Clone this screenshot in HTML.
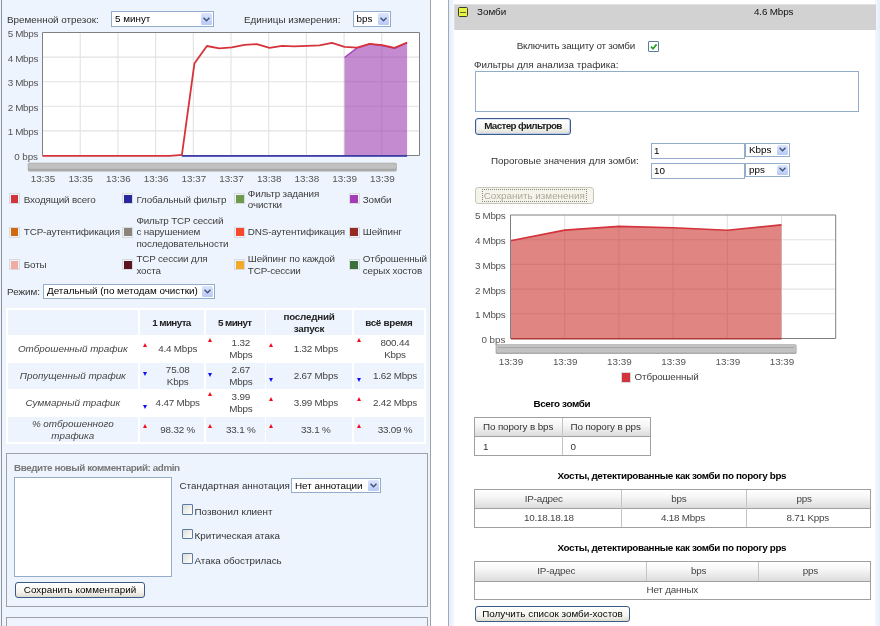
<!DOCTYPE html>
<html lang="ru">
<head>
<meta charset="utf-8">
<title>Зомби</title>
<style>
html,body{margin:0;padding:0;}
body{width:880px;height:626px;overflow:hidden;background:#fff;position:relative;
 font-family:"Liberation Sans",sans-serif;font-size:9.85px;color:#222;line-height:11px;}
#wrap{position:absolute;left:0;top:0;width:880px;height:626px;overflow:hidden;will-change:transform;}
.abs{position:absolute;}
.t{position:absolute;white-space:nowrap;color:#333;}
.b{font-weight:bold;letter-spacing:-0.36px;}
#left{position:absolute;left:0;top:0;width:430px;height:626px;background:#edf4fd;}
#lb1{position:absolute;left:1px;top:0;width:1px;height:626px;background:#8e9299;}
#lb2{position:absolute;left:430px;top:0;width:1px;height:626px;background:#9fa2a8;}
#rb1{position:absolute;left:448px;top:0;width:1px;height:626px;background:#a4a9b3;}
#rstrip{position:absolute;left:449px;top:0;width:5px;height:626px;background:linear-gradient(90deg,#e4eefb,#f4f8fd);}
#rstrip2{position:absolute;left:875px;top:0;width:5px;height:626px;background:linear-gradient(90deg,#f4f8fd,#e4eefb);}
.sel{position:absolute;background:#fff;border:1px solid #93acc9;box-sizing:border-box;}
.sel .tx{position:absolute;left:3px;top:0.7px;color:#000;white-space:nowrap;}
.sel .ar{position:absolute;right:1px;top:1px;bottom:1px;width:11px;background:linear-gradient(#dbe5fc,#b7c9f5);border-radius:1.5px;}
.sel .ar svg{position:absolute;left:2px;top:50%;margin-top:-2.5px;}
.inp{position:absolute;background:#fff;border:1px solid #93acc9;box-sizing:border-box;}
.inp span{position:absolute;left:2px;top:1.2px;color:#000;}
.sw{position:absolute;width:7.6px;height:8px;border:1px solid #d8dadd;padding:0.6px;background-clip:content-box;}
.lg{position:absolute;white-space:nowrap;color:#3c3c3c;line-height:11.6px;letter-spacing:-0.14px;}
.btn{position:absolute;box-sizing:border-box;border:1px solid #3c5a86;border-radius:3px;background:linear-gradient(#ffffff,#f6f5f0 60%,#dedbd0);color:#000;text-align:center;white-space:nowrap;}
.cb{position:absolute;box-sizing:border-box;width:10px;height:10px;border:1px solid #5a7ba6;border-radius:1px;background:linear-gradient(135deg,#deded6,#fff);}
.cell{position:absolute;background:#edf4fd;}
.c{position:absolute;text-align:center;white-space:nowrap;color:#444;transform:translateX(-50%);line-height:12px;letter-spacing:-0.2px;}
.gt{position:absolute;box-sizing:border-box;border:1px solid #a0a0a0;background:#fff;}
.gh{position:absolute;left:0;top:0;right:0;background:linear-gradient(#ffffff,#f6f6f6 40%,#dcdcdc);border-bottom:1px solid #a0a0a0;}
.vd{position:absolute;top:0;bottom:0;width:1px;background:#c4c4c4;}
.up{position:absolute;width:0;height:0;border-left:2.9px solid transparent;border-right:2.9px solid transparent;border-bottom:4px solid #f40a1a;margin:-0.2px 0 0 -0.3px;}
.dn{position:absolute;width:0;height:0;border-left:2.9px solid transparent;border-right:2.9px solid transparent;border-top:4px solid #1010f4;margin:-0.2px 0 0 -0.3px;}
</style>
</head>
<body>
<div id="wrap">
<div id="left"></div><div id="lb1"></div><div id="lb2"></div><div id="rb1"></div><div id="rstrip"></div><div id="rstrip2"></div>
<div class="t" style="left:7px;top:13.7px;">Временной отрезок:</div>
<div class="sel" style="left:111px;top:11.4px;width:102.5px;height:15.5px;"><span class="tx" style="left:3px">5 минут</span><span class="ar"><svg width="7" height="5" viewBox="0 0 7 5"><path d="M0.5 0.7 L3.5 3.7 L6.5 0.7" fill="none" stroke="#42557f" stroke-width="1.45"/></svg></span></div>
<div class="t" style="left:244px;top:13.7px;">Единицы измерения:</div>
<div class="sel" style="left:352.5px;top:11.4px;width:38px;height:15.5px;"><span class="tx" style="left:3px">bps</span><span class="ar"><svg width="7" height="5" viewBox="0 0 7 5"><path d="M0.5 0.7 L3.5 3.7 L6.5 0.7" fill="none" stroke="#42557f" stroke-width="1.45"/></svg></span></div>
<svg class="abs" style="left:0;top:26px;" width="430" height="165" viewBox="0 26 430 165" font-family="Liberation Sans, sans-serif" font-size="9.85">
<rect x="42.5" y="32.5" width="377.0" height="123.0" fill="#fff"/>
<path d="M80.2 32.5V155.5M117.9 32.5V155.5M155.6 32.5V155.5M193.3 32.5V155.5M231.0 32.5V155.5M268.7 32.5V155.5M306.4 32.5V155.5M344.1 32.5V155.5M381.8 32.5V155.5M42.5 57.1H419.5M42.5 81.7H419.5M42.5 106.3H419.5M42.5 130.9H419.5" stroke="#e2e2e2" stroke-width="1.1" fill="none"/>
<path d="M344.5 57.6 L357.1 47.9 L369.6 44.2 L382.1 45.5 L394.6 48.2 L407.1 42.8 L407.1 155.5 L344.5 155.5Z" fill="rgba(158,62,178,0.6)"/>
<path d="M344.5 57.6 L357.1 47.9 L369.6 44.2 L382.1 45.5 L394.6 48.2 L407.1 42.8" fill="none" stroke="#a43bb8" stroke-width="1.3"/>
<path d="M42.5 32.5H419.5V155.5H42.5Z" fill="none" stroke="#808080" stroke-width="1"/>
<path d="M181.9 156.0H407.1" stroke="#2a2aa8" stroke-width="1.5"/>
<path d="M42.5 155.8 L169.4 155.8 L181.9 154.9 L194.4 63.6 L206.9 46.0 L219.4 48.4 L231.9 47.3 L244.5 44.9 L257.0 44.1 L269.5 47.9 L282.0 45.8 L294.5 46.3 L307.0 45.8 L319.5 45.3 L332.0 42.8 L344.5 46.8 L357.1 47.6 L369.6 43.9 L382.1 45.2 L394.6 47.9 L407.1 42.5" fill="none" stroke="#d6333a" stroke-width="1.8" stroke-linejoin="round"/>
<g fill="#555" text-anchor="end"><text x="38" y="36.9" letter-spacing="-0.33">5 Mbps</text><text x="38" y="61.5" letter-spacing="-0.33">4 Mbps</text><text x="38" y="86.1" letter-spacing="-0.33">3 Mbps</text><text x="38" y="110.7" letter-spacing="-0.33">2 Mbps</text><text x="38" y="135.3" letter-spacing="-0.33">1 Mbps</text><text x="38" y="159.9" letter-spacing="-0.05">0 bps</text></g>
<rect x="27.8" y="162.8" width="369" height="8.6" rx="1.5" fill="#a9a9a9"/><rect x="28.6" y="163.4" width="367.4" height="5.3" rx="1" fill="#c1c1c1"/>
<g fill="#555" text-anchor="middle"><text x="43.0" y="182.3">13:35</text><text x="80.7" y="182.3">13:35</text><text x="118.4" y="182.3">13:36</text><text x="156.1" y="182.3">13:36</text><text x="193.8" y="182.3">13:37</text><text x="231.5" y="182.3">13:37</text><text x="269.2" y="182.3">13:38</text><text x="306.9" y="182.3">13:38</text><text x="344.6" y="182.3">13:39</text><text x="382.3" y="182.3">13:39</text></g>
</svg>
<div class="sw" style="left:9.3px;top:193.2px;background-color:#d3333a;"></div><div class="lg" style="left:23.8px;top:193.7px;">Входящий всего</div>
<div class="sw" style="left:122.4px;top:193.2px;background-color:#28289c;"></div><div class="lg" style="left:136.4px;top:193.7px;">Глобальный фильтр</div>
<div class="sw" style="left:234.4px;top:193.2px;background-color:#6e9a4c;"></div><div class="lg" style="left:247.8px;top:187.9px;">Фильтр задания<br>очистки</div>
<div class="sw" style="left:348.9px;top:193.2px;background-color:#a63bb8;"></div><div class="lg" style="left:362.8px;top:193.7px;">Зомби</div>
<div class="sw" style="left:9.3px;top:226.8px;background-color:#d2680d;"></div><div class="lg" style="left:23.8px;top:226.2px;">TCP-аутентификация</div>
<div class="sw" style="left:122.4px;top:226.8px;background-color:#8b857b;"></div><div class="lg" style="left:136.4px;top:214.6px;">Фильтр TCP сессий<br>с нарушением<br>последовательности</div>
<div class="sw" style="left:234.4px;top:226.8px;background-color:#f9492d;"></div><div class="lg" style="left:247.8px;top:226.2px;">DNS-аутентификация</div>
<div class="sw" style="left:348.9px;top:226.8px;background-color:#962a22;"></div><div class="lg" style="left:362.8px;top:226.2px;">Шейпинг</div>
<div class="sw" style="left:9.3px;top:259.1px;background-color:#f2aba3;"></div><div class="lg" style="left:23.8px;top:259.2px;">Боты</div>
<div class="sw" style="left:122.4px;top:259.1px;background-color:#5a1520;"></div><div class="lg" style="left:136.4px;top:253.4px;">TCP сессии для<br>хоста</div>
<div class="sw" style="left:234.4px;top:259.1px;background-color:#f2a92c;"></div><div class="lg" style="left:247.8px;top:253.4px;">Шейпинг по каждой<br>TCP-сессии</div>
<div class="sw" style="left:348.9px;top:259.1px;background-color:#3c6f3b;"></div><div class="lg" style="left:362.8px;top:253.4px;">Отброшенный<br>серых хостов</div>
<div class="t" style="left:7px;top:286px;">Режим:</div>
<div class="sel" style="left:43px;top:283.7px;width:172px;height:15px;"><span class="tx" style="left:3px">Детальный (по методам очистки)</span><span class="ar"><svg width="7" height="5" viewBox="0 0 7 5"><path d="M0.5 0.7 L3.5 3.7 L6.5 0.7" fill="none" stroke="#42557f" stroke-width="1.45"/></svg></span></div>
<div class="abs" style="left:6px;top:308px;width:420px;height:136px;background:#fff;"></div>
<div class="cell" style="left:7.7px;top:310px;width:130.1px;height:25.0px;"></div>
<div class="cell" style="left:139.7px;top:310px;width:63.9px;height:25.0px;"></div>
<div class="cell" style="left:205.5px;top:310px;width:59.2px;height:25.0px;"></div>
<div class="cell" style="left:266.4px;top:310px;width:86.1px;height:25.0px;"></div>
<div class="cell" style="left:354.3px;top:310px;width:69.7px;height:25.0px;"></div>
<div class="cell" style="left:7.7px;top:363.2px;width:130.1px;height:25.4px;"></div>
<div class="cell" style="left:139.7px;top:363.2px;width:63.9px;height:25.4px;"></div>
<div class="cell" style="left:205.5px;top:363.2px;width:59.2px;height:25.4px;"></div>
<div class="cell" style="left:266.4px;top:363.2px;width:86.1px;height:25.4px;"></div>
<div class="cell" style="left:354.3px;top:363.2px;width:69.7px;height:25.4px;"></div>
<div class="cell" style="left:7.7px;top:417.2px;width:130.1px;height:25.0px;"></div>
<div class="cell" style="left:139.7px;top:417.2px;width:63.9px;height:25.0px;"></div>
<div class="cell" style="left:205.5px;top:417.2px;width:59.2px;height:25.0px;"></div>
<div class="cell" style="left:266.4px;top:417.2px;width:86.1px;height:25.0px;"></div>
<div class="cell" style="left:354.3px;top:417.2px;width:69.7px;height:25.0px;"></div>
<div class="c" style="left:171.5px;top:317.2px;font-weight:bold;letter-spacing:-0.62px;color:#222;">1 минута</div>
<div class="c" style="left:234.8px;top:317.2px;font-weight:bold;letter-spacing:-0.62px;color:#222;">5 минут</div>
<div class="c" style="left:309px;top:310.7px;font-weight:bold;letter-spacing:-0.62px;color:#222;letter-spacing:-0.23px;">последний<br>запуск</div>
<div class="c" style="left:388.8px;top:317.2px;font-weight:bold;letter-spacing:-0.62px;color:#222;letter-spacing:-0.29px;">всё время</div>
<div class="c" style="left:72.8px;top:343.3px;font-style:italic;letter-spacing:0;">Отброшенный трафик</div>
<div class="c" style="left:72.8px;top:370.4px;font-style:italic;letter-spacing:0;">Пропущенный трафик</div>
<div class="c" style="left:72.8px;top:397.0px;font-style:italic;letter-spacing:0;">Суммарный трафик</div>
<div class="c" style="left:72.8px;top:418.3px;font-style:italic;letter-spacing:0;">% отброшенного<br>трафика</div>
<div class="c" style="left:177.7px;top:343.3px;">4.4 Mbps</div>
<div class="c" style="left:240.8px;top:337.3px;">1.32<br>Mbps</div>
<div class="c" style="left:315.8px;top:343.3px;">1.32 Mbps</div>
<div class="c" style="left:395px;top:337.3px;">800.44<br>Kbps</div>
<div class="c" style="left:177.7px;top:364.2px;">75.08<br>Kbps</div>
<div class="c" style="left:240.8px;top:364.2px;">2.67<br>Mbps</div>
<div class="c" style="left:315.8px;top:370.2px;">2.67 Mbps</div>
<div class="c" style="left:395px;top:370.2px;">1.62 Mbps</div>
<div class="c" style="left:177.7px;top:396.9px;">4.47 Mbps</div>
<div class="c" style="left:240.8px;top:390.9px;">3.99<br>Mbps</div>
<div class="c" style="left:315.8px;top:396.9px;">3.99 Mbps</div>
<div class="c" style="left:395px;top:396.9px;">2.42 Mbps</div>
<div class="c" style="left:177.7px;top:423.8px;">98.32 %</div>
<div class="c" style="left:240.8px;top:423.8px;">33.1 %</div>
<div class="c" style="left:315.8px;top:423.8px;">33.1 %</div>
<div class="c" style="left:395px;top:423.8px;">33.09 %</div>
<div class="up" style="left:142.8px;top:343.3px;"></div>
<div class="up" style="left:208.3px;top:338.2px;"></div>
<div class="up" style="left:269.6px;top:343.3px;"></div>
<div class="up" style="left:357.3px;top:337.8px;"></div>
<div class="dn" style="left:142.8px;top:372.6px;"></div>
<div class="dn" style="left:208.3px;top:372.8px;"></div>
<div class="dn" style="left:269.6px;top:378.2px;"></div>
<div class="dn" style="left:357.3px;top:378.2px;"></div>
<div class="dn" style="left:142.8px;top:405.2px;"></div>
<div class="up" style="left:208.3px;top:391.8px;"></div>
<div class="up" style="left:269.6px;top:397.2px;"></div>
<div class="up" style="left:357.3px;top:397.2px;"></div>
<div class="up" style="left:142.8px;top:424px;"></div>
<div class="up" style="left:208.3px;top:424px;"></div>
<div class="up" style="left:269.6px;top:424px;"></div>
<div class="up" style="left:357.3px;top:424px;"></div>
<div class="abs" style="left:6px;top:453px;width:421.5px;height:154px;border:1px solid #9da0a6;box-sizing:border-box;"></div>
<div class="abs" style="left:6px;top:617px;width:421.5px;height:20px;border:1px solid #9da0a6;box-sizing:border-box;"></div>
<div class="t b" style="left:14px;top:462px;color:#777;letter-spacing:-0.42px;">Введите новый комментарий: admin</div>
<div class="inp" style="left:14.2px;top:477px;width:157.8px;height:100px;"></div>
<div class="btn" style="left:15px;top:582px;width:130px;height:16px;line-height:14px;">Сохранить комментарий</div>
<div class="t" style="left:179.5px;top:480px;">Стандартная аннотация</div>
<div class="sel" style="left:291px;top:478px;width:89.5px;height:15.3px;"><span class="tx" style="left:3px">Нет аннотации</span><span class="ar"><svg width="7" height="5" viewBox="0 0 7 5"><path d="M0.5 0.7 L3.5 3.7 L6.5 0.7" fill="none" stroke="#42557f" stroke-width="1.45"/></svg></span></div>
<div class="cb" style="left:182px;top:504.3px;width:10.5px;height:10.5px;"></div><div class="t" style="left:194.5px;top:505.8px;">Позвонил клиент</div>
<div class="cb" style="left:182px;top:528.8px;width:10.5px;height:10.5px;"></div><div class="t" style="left:194.5px;top:530.3px;">Критическая атака</div>
<div class="cb" style="left:182px;top:553.3px;width:10.5px;height:10.5px;"></div><div class="t" style="left:194.5px;top:554.8px;">Атака обострилась</div>
<div class="abs" style="left:454px;top:4px;width:422px;height:25.5px;background:#d2d2d2;border-top:1px solid #e2e2e2;border-left:1px solid #dcdcdc;box-sizing:border-box;"></div>
<div class="abs" style="left:458px;top:7px;width:10px;height:10px;box-sizing:border-box;border:1px solid #3a3a28;border-radius:1.5px;background:#e6f542;"></div><div class="abs" style="left:460.4px;top:11.5px;width:5.2px;height:1.1px;background:#66663c;"></div>
<div class="t" style="left:477px;top:6px;color:#111;">Зомби</div>
<div class="t" style="left:754px;top:5.5px;color:#111;letter-spacing:-0.15px;">4.6 Mbps</div>
<div class="t" style="left:516.7px;top:39.6px;letter-spacing:-0.19px;">Включить защиту от зомби</div>
<div class="cb" style="left:648.2px;top:41.4px;width:10.5px;height:10.5px;background:#fff;"></div><svg class="abs" style="left:649.5px;top:43px" width="8" height="8" viewBox="0 0 8 8"><path d="M1 3.6 L3 5.8 L6.6 1.4" fill="none" stroke="#21a121" stroke-width="1.7"/></svg>
<div class="t" style="left:474px;top:58.6px;">Фильтры для анализа трафика:</div>
<div class="inp" style="left:474.5px;top:71px;width:384.5px;height:41px;"></div>
<div class="btn" style="left:475px;top:118.3px;width:96px;height:16.7px;line-height:14.5px;font-weight:bold;letter-spacing:-0.65px;color:#1c1c1c;box-shadow:inset -1px -1px 0 #b9cdf3,inset 1px 1px 0 #dbe6fb;">Мастер фильтров</div>
<div class="t" style="left:491px;top:155.2px;">Пороговые значения для зомби:</div>
<div class="inp" style="left:651px;top:142.5px;width:93.5px;height:16.5px;"><span>1</span></div>
<div class="sel" style="left:745px;top:142.6px;width:44.5px;height:14.8px;"><span class="tx" style="left:3px">Kbps</span><span class="ar"><svg width="7" height="5" viewBox="0 0 7 5"><path d="M0.5 0.7 L3.5 3.7 L6.5 0.7" fill="none" stroke="#42557f" stroke-width="1.45"/></svg></span></div>
<div class="inp" style="left:651px;top:162.5px;width:93.5px;height:16px;"><span>10</span></div>
<div class="sel" style="left:745px;top:162.5px;width:44.5px;height:14.8px;"><span class="tx" style="left:3px">pps</span><span class="ar"><svg width="7" height="5" viewBox="0 0 7 5"><path d="M0.5 0.7 L3.5 3.7 L6.5 0.7" fill="none" stroke="#42557f" stroke-width="1.45"/></svg></span></div>
<div class="btn" style="left:475px;top:187.3px;width:118.5px;height:16.4px;line-height:14px;border-color:#c9c7ba;background:#f5f4ea;color:#aca899;"><span style="display:inline-block;border:1px dotted #888;line-height:11px;padding:0 1px;margin-top:0.5px;">Сохранить изменения</span></div>
<svg class="abs" style="left:454px;top:205px;" width="421" height="182" viewBox="454 205 421 182" font-family="Liberation Sans, sans-serif" font-size="9.85">
<path d="M564.7 215V338.5M618.9 215V338.5M673.1 215V338.5M727.3 215V338.5M781.5 215V338.5M510.5 239.7H835.7M510.5 264.4H835.7M510.5 289.1H835.7M510.5 313.8H835.7" stroke="#e2e2e2" stroke-width="1.1" fill="none"/>
<path d="M510.5 240.7 L564.7 230.1 L618.9 226.4 L673.1 227.8 L727.3 230.3 L781.5 224.9 L781.5 338.5 L510.5 338.5Z" fill="rgba(203,52,47,0.6)"/>
<path d="M510.5 240.7 L564.7 230.1 L618.9 226.4 L673.1 227.8 L727.3 230.3 L781.5 224.9" fill="none" stroke="#d3333a" stroke-width="1.6"/>
<path d="M510.5 215H835.7V338.5H510.5Z" fill="none" stroke="#808080" stroke-width="1"/>
<path d="M511.0 338.7H781.5" stroke="#a8383a" stroke-width="1.4"/>
<g fill="#555" text-anchor="end"><text x="505.3" y="219.4" letter-spacing="-0.33">5 Mbps</text><text x="505.3" y="244.1" letter-spacing="-0.33">4 Mbps</text><text x="505.3" y="268.8" letter-spacing="-0.33">3 Mbps</text><text x="505.3" y="293.5" letter-spacing="-0.33">2 Mbps</text><text x="505.3" y="318.2" letter-spacing="-0.33">1 Mbps</text><text x="505.3" y="342.9" letter-spacing="-0.05">0 bps</text></g>
<rect x="495.6" y="344.2" width="301" height="9.8" rx="1.5" fill="#ababab"/><rect x="496.6" y="344.8" width="299.2" height="7.6" rx="1" fill="#c2c2c2"/><rect x="498" y="347" width="296" height="1.1" fill="#a9a9a9"/>
<g fill="#555" text-anchor="middle"><text x="511.0" y="365.3">13:39</text><text x="565.2" y="365.3">13:39</text><text x="619.4" y="365.3">13:39</text><text x="673.6" y="365.3">13:39</text><text x="727.8" y="365.3">13:39</text><text x="782.0" y="365.3">13:39</text></g>
</svg>
<div class="sw" style="left:620.5px;top:372px;background:#d3333a;"></div><div class="lg" style="left:634.5px;top:371px;">Отброшенный</div>
<div class="t b" style="left:533.5px;top:397.8px;color:#000;">Всего зомби</div>
<div class="gt" style="left:474px;top:417px;width:177px;height:39px;"><div class="gh" style="height:18px;"></div><div class="vd" style="left:87px;"></div></div>
<div class="t" style="left:483px;top:420.8px;letter-spacing:-0.13px;">По порогу в bps</div><div class="t" style="left:570.5px;top:420.8px;letter-spacing:-0.13px;">По порогу в pps</div>
<div class="t" style="left:483px;top:440.5px;">1</div><div class="t" style="left:570.5px;top:440.5px;">0</div>
<div class="t b" style="left:557.5px;top:469.8px;color:#000;">Хосты, детектированные как зомби по порогу bps</div>
<div class="gt" style="left:474px;top:489px;width:397px;height:39px;"><div class="gh" style="height:18px;"></div><div class="vd" style="left:145.5px;"></div><div class="vd" style="left:270.5px;"></div></div>
<div class="c" style="left:543.8px;top:493px;">IP-адрес</div><div class="c" style="left:548.8px;top:512px;">10.18.18.18</div>
<div class="c" style="left:678.8px;top:493px;">bps</div><div class="c" style="left:683px;top:512px;">4.18 Mbps</div>
<div class="c" style="left:804.2px;top:493px;">pps</div><div class="c" style="left:807.8px;top:512px;">8.71 Kpps</div>
<div class="t b" style="left:557.5px;top:541.7px;color:#000;">Хосты, детектированные как зомби по порогу pps</div>
<div class="gt" style="left:474px;top:561px;width:397px;height:39px;"><div class="gh" style="height:19px;"></div><div class="abs" style="left:171px;top:0;height:19px;width:1px;background:#c4c4c4"></div><div class="abs" style="left:283px;top:0;height:19px;width:1px;background:#c4c4c4"></div></div>
<div class="c" style="left:556.3px;top:565.3px;">IP-адрес</div>
<div class="c" style="left:698.6px;top:565.3px;">bps</div>
<div class="c" style="left:810.4px;top:565.3px;">pps</div>
<div class="c" style="left:672.3px;top:584.3px;">Нет данных</div>
<div class="btn" style="left:475px;top:605.5px;width:155px;height:16.5px;line-height:14.5px;">Получить список зомби-хостов</div>
</div>
</body>
</html>
